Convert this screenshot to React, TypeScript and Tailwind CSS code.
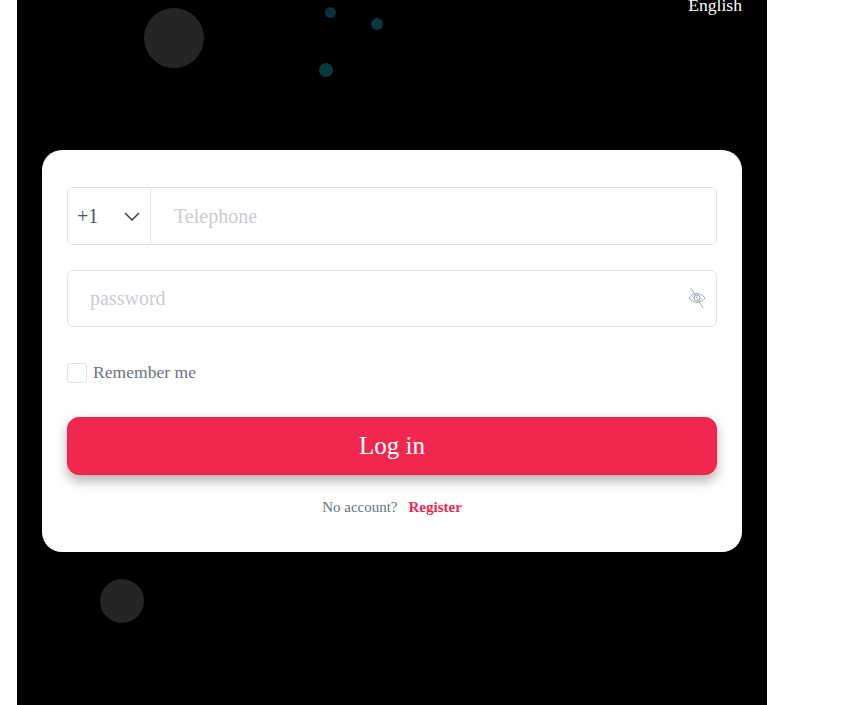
import React from "react";

function Dot({ className }: { className: string }) {
  return <div className={`absolute rounded-full ${className}`} />;
}

export default function App() {
  return (
    <div className="h-[705px] w-[861px] overflow-hidden bg-white font-['Liberation_Serif',serif]">
      <div className="relative ml-[17px] h-[705px] w-[750px] overflow-hidden bg-black">
        <Dot className="left-[127px] top-[8px] h-[60px] w-[60px] bg-[#262424]" />
        <Dot className="left-[308px] top-[7px] h-[11px] w-[11px] bg-[#08323a]" />
        <Dot className="left-[354px] top-[18px] h-[12px] w-[12px] bg-[#053c3a]" />
        <Dot className="left-[301.5px] top-[63px] h-[14px] w-[14px] bg-[#053c3a]" />
        <Dot className="left-[83px] top-[579px] h-[44px] w-[44px] bg-[#262424]" />

        <div className="relative flex h-[150px] items-start justify-end px-[25px]">
          <span className="-mt-[3px] text-[17.6px] leading-[16px] text-white">English</span>
        </div>

        <div className="relative mx-[25px] h-[402px] rounded-[20px] bg-white px-[25px] pt-[37px]">
          <div className="flex h-[58px] rounded-[6px] border border-[#e2e2e4]">
            <div className="flex w-[83px] items-center justify-between border-r border-[#e2e2e4] pl-[9px] pr-[10px]">
              <span className="text-[20px] text-[#4b5563]">+1</span>
              <svg width="16" height="9" viewBox="0 0 16 9" fill="none" stroke="#374151" strokeWidth="1.5">
                <path d="M1 1l7 7 7-7" />
              </svg>
            </div>
            <input
              placeholder="Telephone"
              className="min-w-0 flex-1 bg-transparent pl-[23px] text-[20px] outline-none placeholder:text-[#cbccd2]"
            />
          </div>

          <div className="mt-[25px] flex h-[57px] items-center rounded-[6px] border border-[#e2e2e4] pr-[10px]">
            <input
              placeholder="password"
              className="min-w-0 flex-1 bg-transparent pb-[2px] pl-[22px] text-[20px] outline-none placeholder:text-[#cbccd2]"
            />
            <svg className="mb-[2px]" width="18" height="22" viewBox="0 0 18 22" fill="none" stroke="#9aa5b8" strokeWidth="1">
              <path d="M1 11c2-2.6 5-4.4 8-4.4s6 1.8 8 4.4c-2 2.6-5 4.4-8 4.4s-6-1.8-8-4.4z" />
              <circle cx="9" cy="11" r="3" />
              <path d="M3 1l12 20" />
            </svg>
          </div>

          <div className="mt-[36px] flex h-[20px] items-center">
            <div className="h-[20px] w-[20px] rounded-[3px] border border-[#e2e2e4]" />
            <span className="ml-[6px] pb-[2px] text-[17.6px] text-[#6b7280]">Remember me</span>
          </div>

          <button className="mt-[34px] flex h-[58px] w-full items-center justify-center rounded-[12px] border border-[#ee1d45] bg-[#f02850] text-[25px] text-white shadow-[0_6px_12px_rgba(0,0,0,0.3)]">
            Log in
          </button>

          <div className="mt-[22px] flex items-center justify-center text-[15px] leading-[20px]">
            <span className="text-[#6b7280]">No account?</span>
            <span className="ml-[11px] font-bold text-[#f02850]">Register</span>
          </div>
        </div>
      </div>
    </div>
  );
}
